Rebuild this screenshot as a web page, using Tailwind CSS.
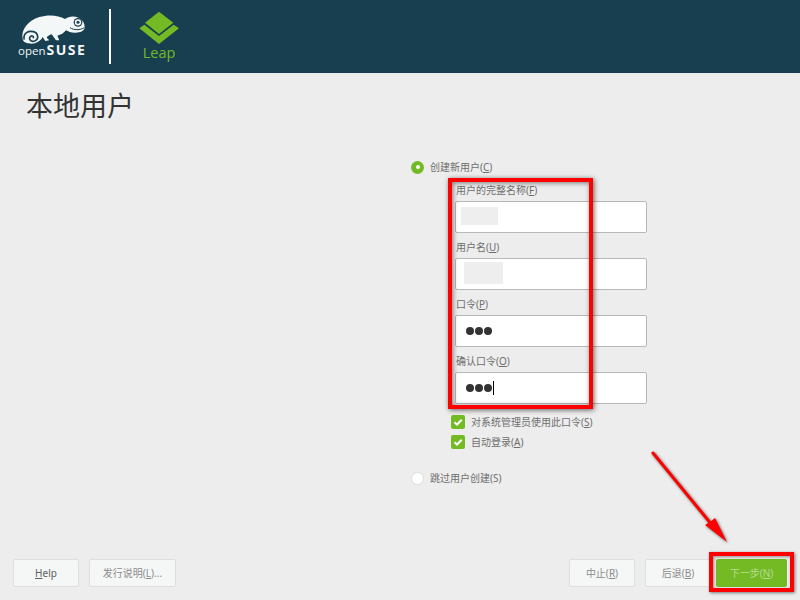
<!DOCTYPE html>
<html lang="zh-CN">
<head>
<meta charset="UTF-8">
<title>本地用户</title>
<script src="https://cdn.jsdelivr.net/npm/@tailwindcss/browser@4"></script>
</head>
<body class="bg-[#ededed] font-['Noto_Sans','Noto_Sans_CJK_SC',sans-serif] text-[#6e6e6e]">
<div class="relative w-[800px] h-[600px] overflow-hidden flex flex-col">

  <!-- header -->
  <header class="h-[73px] bg-[#173f50] flex items-start shrink-0">
    <div class="relative w-[109px] h-[73px]">
      <svg class="absolute left-[19px] top-[13px]" width="68" height="34" viewBox="57 40 204 102">
        <path fill="#f4f7f8" d="M68 118C62 90 85 62 118 52 145 44 175 46 195 58 205 50 222 48 235 54 248 60 255 72 254 84 252 94 240 98 228 99 215 100 205 96 198 92 192 100 182 106 172 108L178 122 168 122 155 104C148 106 142 110 140 114L148 122 136 124 128 112C122 124 108 132 95 132 80 132 70 128 68 118Z"/>
        <path fill="none" stroke="#173f50" stroke-width="5" stroke-linecap="round" d="M72 118C70 100 85 92 100 96 115 100 118 118 104 124 92 128 84 116 92 110 96 107 102 110 100 114"/>
        <circle cx="234" cy="68" r="13" fill="#173f50"/>
        <circle cx="234" cy="68" r="9.500" fill="#f4f7f8"/>
        <circle cx="234" cy="68" r="4.500" fill="#173f50"/>
        <path fill="none" stroke="#173f50" stroke-width="3" d="M210 84C222 92 240 92 253 84"/>
      </svg>
      <div class="absolute left-[18px] top-[42px] text-[#f4f7f8] text-[11.500px] leading-[16px] font-['Open_Sans',sans-serif] whitespace-nowrap">open<span class="font-bold text-[14px] tracking-[1.500px] ml-[1px]">SUSE</span></div>
    </div>
    <div class="w-[1.500px] h-[55px] bg-white mt-[9px]"></div>
    <div class="flex flex-col items-center ml-[28px] w-[41px] pt-[11px]">
      <svg width="40" height="34" viewBox="417 33 120 102" class="block">
        <path fill="#73ba25" d="M477 35 520 68 477 102 435 68Z"/>
        <path fill="#73ba25" d="M418 85 433 74 477 108 521 74 537 85 477 132Z"/>
      </svg>
      <span class="text-[#73ba25] text-[14.500px] leading-[16px] font-['Open_Sans',sans-serif]">Leap</span>
    </div>
  </header>

  <!-- title -->
  <h1 class="pl-[26px] pt-[15px] text-[27px] leading-[36px] font-normal text-[#333]">本地用户</h1>

  <!-- form -->
  <div class="ml-[411px] mt-[36px] flex flex-col text-[10px] leading-[14px]">
    <label class="flex items-center gap-[6px] h-[14px]">
      <span class="w-[13px] h-[13px] rounded-full bg-[#73ba25] flex items-center justify-center"><span class="w-[4px] h-[4px] rounded-full bg-white"></span></span>
      <span>创建新用户(<u>C</u>)</span>
    </label>

    <div class="ml-[44px] w-[192px] mt-[1px] flex flex-col">
      <div class="h-[26px] pl-px pt-[8px]">用户的完整名称(<u>F</u>)</div>
      <div class="relative h-[32px] bg-white border border-[#b8b8b8] rounded-[2px]">
        <div class="absolute left-[5px] top-[5px] w-[37px] h-[18px] bg-[#eeeeee]"></div>
      </div>
      <div class="h-[25px] pl-px pt-[7px]">用户名(<u>U</u>)</div>
      <div class="relative h-[32px] bg-white border border-[#b8b8b8] rounded-[2px]">
        <div class="absolute left-[8px] top-[3px] w-[39px] h-[22px] bg-[#eeeeee]"></div>
      </div>
      <div class="h-[25px] pl-px pt-[7px]">口令(<u>P</u>)</div>
      <div class="h-[32px] bg-white border border-[#b8b8b8] rounded-[2px] flex items-center gap-[1px] pl-[10px]">
        <span class="w-[8px] h-[8px] rounded-full bg-[#333]"></span><span class="w-[8px] h-[8px] rounded-full bg-[#333]"></span><span class="w-[8px] h-[8px] rounded-full bg-[#333]"></span>
      </div>
      <div class="h-[25px] pl-px pt-[7px]">确认口令(<u>O</u>)</div>
      <div class="h-[32px] bg-white border border-[#b8b8b8] rounded-[2px] flex items-center gap-[1px] pl-[10px]">
        <span class="w-[8px] h-[8px] rounded-full bg-[#333]"></span><span class="w-[8px] h-[8px] rounded-full bg-[#333]"></span><span class="w-[8px] h-[8px] rounded-full bg-[#333]"></span><span class="w-px h-[14px] bg-black"></span>
      </div>
    </div>

    <div class="ml-[40px] mt-[11px] flex flex-col gap-[6px]">
      <label class="flex items-center gap-[6px] h-[14px]">
        <svg width="14" height="14" viewBox="0 0 14 14"><rect width="14" height="14" rx="2" fill="#73ba25"/><path d="M3.500 7.200 6 9.500 10.700 4.800" fill="none" stroke="#fff" stroke-width="2"/></svg>
        <span>对系统管理员使用此口令(<u>S</u>)</span>
      </label>
      <label class="flex items-center gap-[6px] h-[14px]">
        <svg width="14" height="14" viewBox="0 0 14 14"><rect width="14" height="14" rx="2" fill="#73ba25"/><path d="M3.500 7.200 6 9.500 10.700 4.800" fill="none" stroke="#fff" stroke-width="2"/></svg>
        <span>自动登录(<u>A</u>)</span>
      </label>
    </div>

    <label class="flex items-center gap-[6px] h-[14px] mt-[22px]">
      <span class="w-[13px] h-[13px] rounded-full bg-white border border-[#dcdcdc]"></span>
      <span>跳过用户创建(S)</span>
    </label>
  </div>

  <!-- buttons -->
  <footer class="absolute left-0 right-0 bottom-[13px] h-[28px] flex items-center pl-[13px] pr-[13px] gap-[10px] text-[10px]">
    <button class="w-[66px] h-[28px] bg-[#f5f6f6] border border-[#dedede] rounded-[2px] text-[#5f5f5f]"><u>H</u>elp</button>
    <button class="w-[87px] h-[28px] bg-[#f5f6f6] border border-[#dedede] rounded-[2px] text-[#8c8c8c]">发行说明(<u>L</u>)...</button>
    <button class="w-[66px] h-[28px] ml-auto bg-[#f5f6f6] border border-[#dedede] rounded-[2px] text-[#8c8c8c]">中止(<u>R</u>)</button>
    <button class="w-[66px] h-[28px] bg-[#f5f6f6] border border-[#dedede] rounded-[2px] text-[#8c8c8c]">后退(<u>B</u>)</button>
    <button class="w-[71px] h-[28px] -ml-[5px] bg-[#73ba25] rounded-[2px] text-[#b7dd92]">下一步(<u>N</u>)</button>
  </footer>

  <!-- annotations drawn over the screenshot -->
  <div class="absolute left-[448px] top-[178px] w-[145px] h-[231px] border-[4px] border-[#ff0000] shadow-[1px_1px_5px_rgba(0,0,0,0.6),inset_1px_1px_5px_rgba(0,0,0,0.5)]"></div>
  <div class="absolute left-[709px] top-[552px] w-[85px] h-[40px] border-[4px] border-[#ff0000] shadow-[1px_1px_3px_rgba(0,0,0,0.5),inset_1px_1px_3px_rgba(0,0,0,0.4)]"></div>
  <svg class="absolute left-[640px] top-[440px] drop-shadow-[1px_1px_1.500px_rgba(0,0,0,0.6)]" width="100" height="110" viewBox="0 0 100 110">
    <path d="M13 13 72 85" stroke="#ff0000" stroke-width="3" stroke-linecap="round"/>
    <path d="M87 102 65 85 70 82 75 78Z" fill="#ff0000"/>
  </svg>
</div>
</body>
</html>
